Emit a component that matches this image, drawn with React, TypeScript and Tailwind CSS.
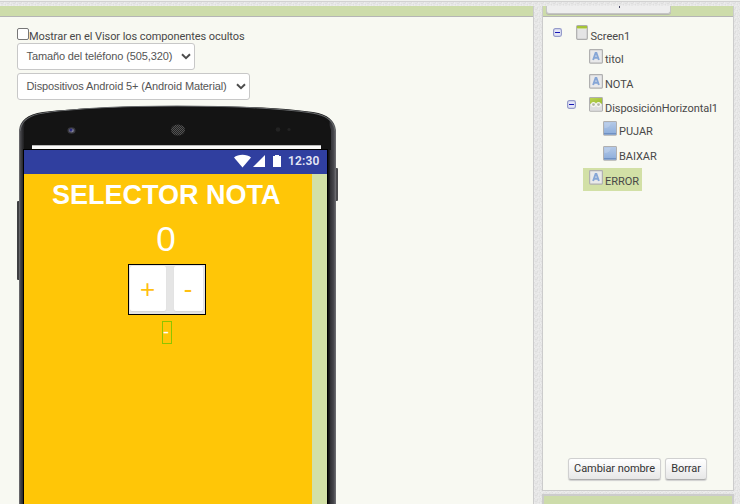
import React from "react";

const Texture = () => (
  <svg className="absolute inset-0 h-full w-full">
    <defs>
      <pattern id="weave" width="6" height="6" patternUnits="userSpaceOnUse">
        <rect width="6" height="6" fill="#e6e6e6" />
        <path d="M0 0h1v1H0zM3 1h1v2H3zM1 3h2v1H1zM5 4h1v1H5z" fill="#dedede" />
        <path d="M1 0h2v1H1zM4 2h1v2H4zM0 4h1v2H0zM3 5h2v1H3z" fill="#ececec" />
      </pattern>
    </defs>
    <rect width="100%" height="100%" fill="url(#weave)" />
    <rect width="100%" height="1" fill="#f0f1ee" />
    <rect y="1" width="100%" height="1" fill="#d2d2d2" />
  </svg>
);

const PhoneFrame = () => (
  <svg className="absolute left-0 top-0" width="322" height="400" viewBox="17 104 322 400">
    <defs>
      <linearGradient id="bezel" x1="19" x2="336" y1="0" y2="0" gradientUnits="userSpaceOnUse">
        <stop offset="0" stopColor="#77777a" />
        <stop offset=".004" stopColor="#4a4a4e" />
        <stop offset=".012" stopColor="#29292c" />
        <stop offset=".02" stopColor="#141414" />
        <stop offset=".978" stopColor="#141414" />
        <stop offset=".982" stopColor="#303034" />
        <stop offset=".993" stopColor="#48484d" />
        <stop offset="1" stopColor="#737377" />
      </linearGradient>
      <pattern id="grille" width="2" height="2" patternUnits="userSpaceOnUse">
        <rect width="2" height="2" fill="#222222" />
        <path d="M0 0h1v1H0zM1 1h1v1H1z" fill="#525252" />
      </pattern>
    </defs>
    <rect x="17" y="201" width="3" height="79" rx="1" fill="#3e3e41" />
    <rect x="335" y="168" width="3" height="33" rx="1" fill="#4a4a4d" />
    <path d="M19 510V130C20 121 27 114 43 112C78 108 129 106 177 106C230 106 280 107 313 112C328 114 335 121 336 130V510Z" fill="url(#bezel)" />
    <path d="M20 131C21 122 28 115 44 113C79 108 130 106 177 106C229 106 278 108 312 113C327 115 334 122 335 131" fill="none" stroke="#66686a" strokeWidth="1.1" />
    <path d="M24 150V128C26 120 33 116 48 113C82 109 130 107 177 107C225 107 278 109 309 114C322 116 329 122 331 130V150Z" fill="#141414" />
    <ellipse cx="71.5" cy="130.5" rx="4" ry="3.3" fill="#39393f" />
    <ellipse cx="71.5" cy="130.5" rx="2.6" ry="2" fill="#707084" />
    <circle cx="71" cy="130" r="1.5" fill="#29297e" />
    <circle cx="72.2" cy="131" r=".6" fill="#aaaabc" />
    <ellipse cx="178" cy="130" rx="7" ry="5.5" fill="url(#grille)" />
    <circle cx="278" cy="129.5" r="2.3" fill="#232323" />
    <circle cx="289" cy="129.5" r="1.6" fill="#232323" />
    <rect x="32" y="145" width="289" height="4" fill="#fafafa" />
    <rect x="32" y="145" width="289" height="1" fill="#b9b9b9" />
  </svg>
);

const Collapse = () => (
  <svg width="9" height="9" viewBox="0 0 9 9" className="shrink-0">
    <rect x=".6" y=".6" width="7.8" height="7.8" rx="1.8" fill="#e4e6f6" stroke="#959bca" strokeWidth="1.2" />
    <path d="M2 4h5v1H2z" fill="#1717b5" />
  </svg>
);

type Kind = "screen" | "label" | "arrangement" | "button";

const Icon = ({ kind }: { kind: Kind }) => {
  if (kind === "screen")
    return (
      <svg width="12" height="15" viewBox="0 0 12 15" className="shrink-0">
        <rect x=".7" y=".7" width="10.6" height="13.6" rx="1" fill="#e4e4e5" stroke="#adadad" strokeWidth="1.2" />
        <path d="M1 1h10v2H1z" fill="#a6c437" />
        <path d="M1 3h10v1H1z" fill="#cddd91" />
      </svg>
    );
  return (
    <svg width="14" height="15" viewBox="0 0 14 15" className="shrink-0">
      <defs>
        <linearGradient id="blue" x2="0" y2="1"><stop stopColor="#b4c9e7" /><stop offset="1" stopColor="#8caddb" /></linearGradient>
        <linearGradient id="green" x2="1" y2="1"><stop stopColor="#bbd452" /><stop offset="1" stopColor="#9dbd34" /></linearGradient>
      </defs>
      <rect x=".6" y=".6" width="12.8" height="13.5" rx=".8" fill="#e9e9ea" stroke="#b0b0b0" strokeWidth="1.2" />
      {kind === "label" && <path d="M4.1 11 6.6 4h.8l2.5 7M5 8.7h4" fill="none" stroke="#86a6d6" strokeWidth="1.9" />}
      {kind === "button" && (
        <>
          <path d="M1 1h12v12.5H1z" fill="url(#blue)" />
          <path d="M1 12h12v1.5H1z" fill="#6f91c3" />
          <path d="M1.5 2h6C7.500 5 5 7 1.500 7z" fill="#d5e0f1" opacity=".3" />
        </>
      )}
      {kind === "arrangement" && (
        <>
          <path d="M1 1h12v5H1z" fill="url(#green)" />
          <path d="M1 6h12v7.500H1z" fill="#dededf" />
          <path d="M1 6h12v1H1z" fill="#b2c966" />
          <circle cx="4.500" cy="7.600" r="2" fill="#b4b7aa" stroke="#f6f7f0" strokeWidth="1.100" />
          <circle cx="9.500" cy="7.600" r="2" fill="#b4b7aa" stroke="#f6f7f0" strokeWidth="1.100" />
        </>
      )}
    </svg>
  );
};

const Row = ({ kind, name, className, toggle, selected, low }: { kind: Kind; name: string; className: string; toggle?: boolean; selected?: boolean; low?: boolean }) => (
  <div className={`flex items-start ${className}`}>
    {toggle && <div className={kind === "screen" ? "mr-[14px] pt-[5px]" : "mr-[13px] pt-[5px]"}><Collapse /></div>}
    <div className={`flex h-[23px] shrink-0 items-start gap-[2px] pt-[2px] ${selected ? "w-[59px] bg-[#d2e0a6] pl-[6px]" : ""}`}>
      <Icon kind={kind} />
      <span className={`whitespace-nowrap text-[11px] leading-[14px] tracking-[-0.04px] text-[#484848] ${kind === "screen" ? "pl-[0.6px]" : ""} ${low ? "pt-[5px]" : "pt-[4px]"}`}>{name}</span>
    </div>
  </div>
);

const Select = ({ label, className }: { label: string; className: string }) => (
  <div className={`flex h-[27px] items-center justify-between rounded-[3px] border border-[#c8c8c8] bg-white pl-[8.5px] pr-[3px] text-[11px] text-[#555] ${className}`}>
    <span className="whitespace-nowrap font-['Liberation_Sans',sans-serif] tracking-[-0.12px]">{label}</span>
    <svg width="10" height="7" viewBox="0 0 10 7"><path d="m1 1.3 4 3.8 4-3.8" fill="none" stroke="#4c4c4c" strokeWidth="2" /></svg>
  </div>
);

const Button = ({ children, className }: { children: string; className: string }) => (
  <button className={`h-[22px] whitespace-nowrap rounded-[3px] border border-[#d0d0d0] border-b-[#adadad] bg-linear-to-b from-white to-[#e7e7e7] text-[11px] leading-[18px] tracking-[-0.06px] text-[#333] shadow-[0_1px_1px_#d0d0d0] ${className}`}>{children}</button>
);

const Phone = () => (
  <div className="relative ml-[17px] mt-[4px] h-[400px] w-[322px] shrink-0 pl-[6px] pt-[45px]">
    <PhoneFrame />
    <div className="relative flex h-[355px] w-[305px] flex-col border border-b-0 border-black">
      <div className="flex h-[24px] shrink-0 items-center bg-[#303f9f] pl-[210px] text-[#e5e7f5]">
        <svg width="49" height="14" viewBox="0 0 49 14" className="-mt-[3px]">
          <path d="M0 3.5C4-.1 13-.1 17 3.5L8.5 13.5z" fill="#fff" />
          <path d="M31 1v12H19z" fill="#fff" />
          <path d="M39 2h2V1h4v1h2v11h-8z" fill="#fff" />
        </svg>
        <span className="ml-[5px] -mt-[3px] text-[12px] font-semibold leading-[14px] tracking-[0.15px]">12:30</span>
      </div>
      <div className="flex flex-1">
        <div className="flex w-[288px] flex-col items-center bg-[#ffc607] font-['Liberation_Sans',sans-serif] text-white">
          <div className="mt-[5px] w-full whitespace-nowrap pl-[28px] text-[27px] font-bold leading-[32px]">SELECTOR NOTA</div>
          <div className="mt-[8px] pr-[4px] text-[35px] leading-[39px]">0</div>
          <div className="mr-[2px] mt-[6px] flex h-[51px] w-[78px] gap-[8px] border border-black bg-[#e5e5e5] pl-px pt-px text-[26px] text-[#ffc010]">
            <div className="flex h-[45px] w-[36px] items-center justify-center rounded-[2px] bg-white pr-px pt-px shadow-[0_1px_1px_#d6d6d6]">+</div>
            <div className="flex h-[45px] w-[29px] items-center justify-center rounded-[2px] bg-white pr-px pt-px shadow-[0_1px_1px_#d6d6d6]">-</div>
          </div>
          <div className="mr-[2px] mt-[6px] h-[23px] w-[10px] border border-[#8ec400] text-[18px] leading-[21px]">-</div>
        </div>
        <div className="flex-1 bg-[#d2e0a6]" />
      </div>
    </div>
  </div>
);

export default function App() {
  return (
    <main className="relative h-[504px] w-[740px] overflow-hidden bg-[#e6e6e6] font-['Roboto',sans-serif]">
      <Texture />
      <div className="relative flex h-full pt-[6px]">
        <section className="flex w-[534px] flex-col border-r border-[#ccc] bg-[#f8f9f2]">
          <div className="h-[11px] shrink-0 border-b border-[#b5b5b5] bg-[#cddcaa]" />
          <div className="ml-[17px] mt-[11px] flex h-[15px] shrink-0 items-start">
            <div className="h-[12px] w-[12px] rounded-[2px] border border-[#777] bg-white" />
            <span className="whitespace-nowrap pt-[2px] text-[11px] leading-[14px] tracking-[-0.07px] text-[#484848]">Mostrar en el Visor los componentes ocultos</span>
          </div>
          <Select label="Tamaño del teléfono (505,320)" className="ml-[17px] w-[178px] shrink-0" />
          <Select label="Dispositivos Android 5+ (Android Material)" className="ml-[17px] mt-[3px] w-[233px] shrink-0" />
          <Phone />
        </section>
        <aside className="ml-[8px] flex w-[192px] flex-col">
          <div className="flex h-[485px] flex-col border border-t-0 border-[#ccc] bg-[#f8f9f2]">
            <div className="h-[11px] shrink-0 border-b border-[#b5b5b5] bg-[#cddcaa] pl-[3px]">
              <div className="flex h-[8px] w-[125px] justify-center rounded-b-[3px] border border-t-0 border-[#c5c5c5] bg-[#eeeeee] pl-[21px] shadow-[0_1px_0_#b5b8ac]">
                <div className="h-[2px] w-[1px] bg-[#454565]" />
              </div>
            </div>
            <div className="mt-[6px] flex flex-col">
              <Row toggle low kind="screen" name="Screen1" className="h-[24px] pl-[10px]" />
              <Row kind="label" name="titol" className="h-[25px] pl-[46px]" />
              <Row kind="label" name="NOTA" className="h-[23px] pl-[46px]" />
              <Row toggle low kind="arrangement" name="DisposiciónHorizontal1" className="h-[24px] pl-[24px]" />
              <Row kind="button" name="PUJAR" className="h-[25px] pl-[60px]" />
              <Row kind="button" name="BAIXAR" className="h-[24px] pl-[60px]" />
              <Row selected low kind="label" name="ERROR" className="h-[24px] pl-[40px]" />
            </div>
            <div className="mt-auto mb-[10px] flex gap-[4px] pl-[25px]">
              <Button className="w-[93px]">Cambiar nombre</Button>
              <Button className="w-[42px]">Borrar</Button>
            </div>
          </div>
          <div className="mt-[3px] flex-1 border-2 border-b-0 border-[#ccc] bg-[#cddcaa]" />
        </aside>
      </div>
    </main>
  );
}
